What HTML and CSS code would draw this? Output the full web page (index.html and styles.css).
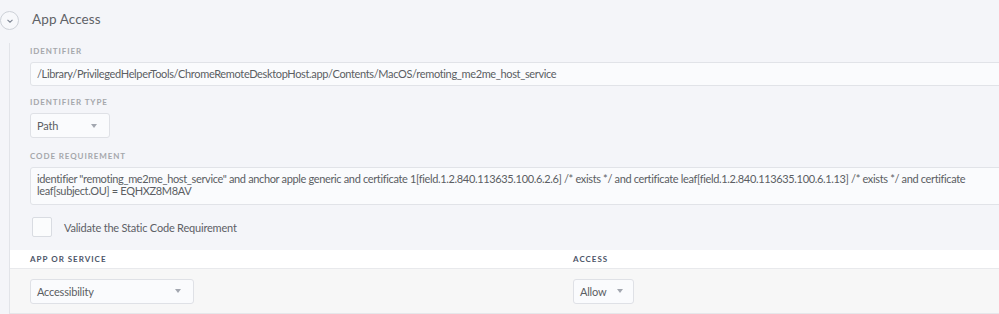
FILE: index.html
```html
<!DOCTYPE html>
<html lang="en">
<head>
    <meta charset="UTF-8">
    <title>App Access</title>
    <link rel="stylesheet" href="styles.css">
</head>
<body>
    <div class="panel">
        <!-- Section header -->
        <div class="section-head">
            <span class="toggle">
                <svg width="8" height="6" viewBox="0 0 8 6"><path d="M1.5 1.8 L4 4.2 L6.5 1.8" fill="none" stroke="#7d8594" stroke-width="1.1"/></svg>
            </span>
            <h2>App Access</h2>
        </div>

        <div class="section-body">
            <div class="fields">
                <div class="field">
                    <label>Identifier</label>
                    <div class="input">/Library/PrivilegedHelperTools/ChromeRemoteDesktopHost.app/Contents/MacOS/remoting_me2me_host_service</div>
                </div>

                <div class="field field-type">
                    <label>Identifier Type</label>
                    <div class="select select-path">Path <span class="caret"></span></div>
                </div>

                <div class="field">
                    <label>Code Requirement</label>
                    <div class="input textarea">identifier "remoting_me2me_host_service" and anchor apple generic and certificate 1[field.1.2.840.113635.100.6.2.6] /* exists */ and certificate leaf[field.1.2.840.113635.100.6.1.13] /* exists */ and certificate<br>leaf[subject.OU] = EQHXZ8M8AV</div>
                </div>

                <div class="check-row">
                    <span class="checkbox"></span>
                    <span class="check-label">Validate the Static Code Requirement</span>
                </div>
            </div>

            <div class="table">
                <div class="table-head">
                    <div class="col col-app">App or Service</div>
                    <div class="col col-access">Access</div>
                </div>
                <div class="table-row">
                    <div class="col col-app">
                        <div class="select select-app">Accessibility <span class="caret"></span></div>
                    </div>
                    <div class="col col-access">
                        <div class="select select-access">Allow <span class="caret"></span></div>
                    </div>
                </div>
            </div>
        </div>
    </div>
</body>
</html>
```

FILE: styles.css
```css
* {
    margin: 0;
    padding: 0;
    box-sizing: border-box;
}

body {
    background: #f4f5f9;
    font-family: Lato, 'Open Sans', Arial, sans-serif;
    color: #5b5e63;
    overflow: hidden;
}

.panel {
    width: 1020px;
}

.section-head {
    display: flex;
    align-items: center;
    height: 43px;
    padding-bottom: 6px;
}

.toggle {
    width: 19px;
    height: 19px;
    border: 1px solid #cdd1d8;
    border-radius: 50%;
    display: flex;
    align-items: center;
    justify-content: center;
    margin-top: 4px;
    background: #f7f8fb;
}

.section-head h2 {
    font-size: 13.5px;
    font-weight: 400;
    color: #5f6267;
    margin-left: 13px;
    letter-spacing: 0.1px;
}

.section-body {
    margin-left: 9px;
    border-left: 1px solid #e2e4e9;
}

.fields {
    padding: 2px 0 13px 20px;
}

.field {
    margin-bottom: 10px;
}

.field-type {
    margin-bottom: 12px;
}

label {
    display: block;
    height: 12px;
    line-height: 12px;
    font-size: 8px;
    font-weight: 700;
    letter-spacing: 0.9px;
    text-transform: uppercase;
    color: #a5a7ab;
    margin-bottom: 5px;
}

.input {
    height: 24px;
    line-height: 22px;
    padding: 0 6px;
    font-size: 11px;
    letter-spacing: -0.35px;
    background: #fafbfd;
    border: 1px solid #e1e3e8;
    border-radius: 3px;
    color: #5b5e63;
    white-space: nowrap;
}

.textarea {
    height: 38px;
    line-height: 12px;
    padding-top: 5px;
    white-space: normal;
}

.select {
    display: flex;
    align-items: center;
    justify-content: space-between;
    height: 25px;
    padding: 0 12px 0 6px;
    font-size: 11px;
    letter-spacing: -0.2px;
    background: #fafbfd;
    border: 1px solid #dfe1e6;
    border-radius: 3px;
    color: #5b5e63;
}

.caret {
    width: 0;
    height: 0;
    border-left: 3.5px solid transparent;
    border-right: 3.5px solid transparent;
    border-top: 4px solid #a3a7b0;
}

.select-path {
    width: 80px;
}

.select-app {
    width: 164px;
}

.select-access {
    width: 61px;
    padding-right: 10px;
}

.check-row {
    display: flex;
    align-items: center;
    margin-top: 12px;
}

.checkbox {
    width: 20px;
    height: 20px;
    margin-left: 2px;
    background: #fbfcfd;
    border: 1px solid #d9dce2;
    border-radius: 2px;
}

.check-label {
    font-size: 11px;
    letter-spacing: -0.2px;
    margin-left: 12px;
    color: #5d6066;
}

.table-head {
    display: flex;
    height: 19px;
    align-items: center;
    background: #fff;
    border-bottom: 1px solid #e8e9ec;
}

.table-head .col {
    font-size: 8px;
    font-weight: 700;
    letter-spacing: 1px;
    text-transform: uppercase;
    color: #4c5467;
}

.col-app {
    width: 543px;
    padding-left: 20px;
}

.col-access {
    padding-left: 20px;
}

.table-row {
    display: flex;
    align-items: center;
    height: 45px;
    background: #f7f7f7;
    border-bottom: 1px solid #e6e7ea;
}
```
